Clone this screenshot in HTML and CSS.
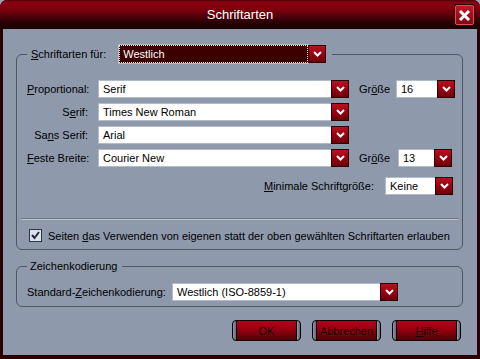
FILE: index.html
```html
<!DOCTYPE html>
<html lang="de">
<head>
  <meta charset="UTF-8">
  <meta name="viewport" content="width=device-width, initial-scale=1.0">
  <title>Schriftarten</title>
  <link rel="stylesheet" href="styles.css">
</head>
<body>
  <div class="window">
    <div class="titlebar">
      <span class="title">Schriftarten</span>
      <button class="close" aria-label="Schließen">
        <svg width="13" height="13" viewBox="0 0 13 13"><path d="M2 2 L11 11 M11 2 L2 11" stroke="#fff" stroke-width="3" fill="none"/></svg>
      </button>
    </div>

    <div class="content">
      <!-- Schriftarten -->
      <fieldset class="group fonts">
        <legend class="legend-select">
          <span class="legend-label"><u>S</u>chriftarten für:</span>
          <div class="combo combo-dark w-lang">
            <span class="field">Westlich</span>
            <span class="drop"><svg width="9" height="6" viewBox="0 0 9 6"><path d="M1 1 L4.5 4.5 L8 1" stroke="#fff" stroke-width="2" fill="none"/></svg></span>
          </div>
        </legend>

        <div class="row">
          <span class="lbl"><u>P</u>roportional:</span>
          <div class="combo w-main">
            <span class="field">Serif</span>
            <span class="drop"><svg width="9" height="6" viewBox="0 0 9 6"><path d="M1 1 L4.5 4.5 L8 1" stroke="#fff" stroke-width="2" fill="none"/></svg></span>
          </div>
          <span class="size-lbl">Gr<u>ö</u>ße</span>
          <div class="combo w-size">
            <span class="field">16</span>
            <span class="drop"><svg width="9" height="6" viewBox="0 0 9 6"><path d="M1 1 L4.5 4.5 L8 1" stroke="#fff" stroke-width="2" fill="none"/></svg></span>
          </div>
        </div>

        <div class="row">
          <span class="lbl">S<u>e</u>rif:</span>
          <div class="combo w-main">
            <span class="field">Times New Roman</span>
            <span class="drop"><svg width="9" height="6" viewBox="0 0 9 6"><path d="M1 1 L4.5 4.5 L8 1" stroke="#fff" stroke-width="2" fill="none"/></svg></span>
          </div>
        </div>

        <div class="row">
          <span class="lbl">Sa<u>n</u>s Serif:</span>
          <div class="combo w-main">
            <span class="field">Arial</span>
            <span class="drop"><svg width="9" height="6" viewBox="0 0 9 6"><path d="M1 1 L4.5 4.5 L8 1" stroke="#fff" stroke-width="2" fill="none"/></svg></span>
          </div>
        </div>

        <div class="row">
          <span class="lbl"><u>F</u>este Breite:</span>
          <div class="combo w-main">
            <span class="field">Courier New</span>
            <span class="drop"><svg width="9" height="6" viewBox="0 0 9 6"><path d="M1 1 L4.5 4.5 L8 1" stroke="#fff" stroke-width="2" fill="none"/></svg></span>
          </div>
          <span class="size-lbl wide">Gr<u>ö</u>ße</span>
          <div class="combo w-size2">
            <span class="field">13</span>
            <span class="drop"><svg width="9" height="6" viewBox="0 0 9 6"><path d="M1 1 L4.5 4.5 L8 1" stroke="#fff" stroke-width="2" fill="none"/></svg></span>
          </div>
        </div>

        <div class="row row-min">
          <span class="min-lbl"><u>M</u>inimale Schriftgröße:</span>
          <div class="combo w-min">
            <span class="field">Keine</span>
            <span class="drop"><svg width="9" height="6" viewBox="0 0 9 6"><path d="M1 1 L4.5 4.5 L8 1" stroke="#fff" stroke-width="2" fill="none"/></svg></span>
          </div>
        </div>

        <div class="separator"></div>

        <label class="check-row">
          <span class="checkbox">
            <svg width="13" height="13" viewBox="0 0 13 13"><path d="M3 6 L5.5 9 L10 3" stroke="#1f2a40" stroke-width="2" fill="none"/></svg>
          </span>
          <span>Seiten <u>d</u>as Verwenden von eigenen statt der oben gewählten Schriftarten erlauben</span>
        </label>
      </fieldset>

      <!-- Zeichenkodierung -->
      <fieldset class="group encoding">
        <legend class="legend-text">Zeichenkodierung</legend>
        <div class="row">
          <span class="enc-lbl">Standard-<u>Z</u>eichenkodierung:</span>
          <div class="combo w-enc">
            <span class="field">Westlich (ISO-8859-1)</span>
            <span class="drop"><svg width="9" height="6" viewBox="0 0 9 6"><path d="M1 1 L4.5 4.5 L8 1" stroke="#fff" stroke-width="2" fill="none"/></svg></span>
          </div>
        </div>
      </fieldset>

      <div class="buttons">
        <button class="btn">OK</button>
        <button class="btn">Abbrechen</button>
        <button class="btn"><u>H</u>ilfe</button>
      </div>
    </div>
  </div>
</body>
</html>
```

FILE: styles.css
```css
/* Grundlayout */
html, body {
  margin: 0;
  padding: 0;
  background: #9aa3b0;
}
body {
  font-family: 'Liberation Sans', Arial, sans-serif;
  font-size: 11px;
  color: #000;
}
u {
  text-decoration: underline;
  text-underline-offset: 1px;
}
/* Fensterrahmen */
.window {
  width: 480px;
  height: 359px;
  box-sizing: border-box;
  background: #2a0003;
  border-radius: 7px 7px 0 0;
  display: flex;
  flex-direction: column;
  overflow: hidden;
}
.titlebar {
  position: relative;
  height: 29px;
  flex: none;
  display: flex;
  align-items: center;
  justify-content: center;
  background: linear-gradient(#4a000c 0, #8a0010 2px, #80000f 9px, #4c000a 17px, #260000 23px, #1c0000 29px);
}
.title {
  color: #fff;
  font-size: 13px;
}
.close {
  position: absolute;
  right: 6px;
  top: 5px;
  width: 19px;
  height: 20px;
  padding: 0;
  display: flex;
  align-items: center;
  justify-content: center;
  border: 1px solid #d8505c;
  border-radius: 2px;
  background: linear-gradient(#c41826, #9c0c18 60%, #800812);
  box-shadow: 0 0 0 1px #300004;
}
.content {
  flex: 1;
  margin: 0 3px 4px;
  background: #8e99ac;
  display: flex;
  flex-direction: column;
}
/* Gruppen */
.group {
  margin: 16px 14px 0 13px;
  padding: 17px 6px 7px 10px;
  border: 1px solid #515761;
  border-radius: 6px;
  min-width: 0;
}
.legend-select {
  display: flex;
  align-items: center;
  padding: 0 6px 0 4px;
}
.legend-label {
  margin-right: 13px;
}
.legend-text {
  padding: 0 5px 0 3px;
  line-height: 13px;
}
.encoding {
  margin-top: 10px;
  padding: 10px 6px 5px 10px;
}
/* Zeilen */
.row {
  display: flex;
  align-items: center;
  height: 18px;
  margin-bottom: 5px;
}
.encoding .row {
  margin-bottom: 0;
}
.lbl {
  width: 61px;
  flex: none;
  text-align: right;
  margin-right: 10px;
  white-space: nowrap;
}
.size-lbl {
  width: 37px;
  flex: none;
  margin-left: 10px;
}
.size-lbl.wide {
  width: 39px;
}
.row-min {
  justify-content: flex-end;
  margin-top: 10px;
  margin-bottom: 0;
}
.min-lbl {
  margin-right: 11px;
}
.row-min .combo {
  margin-right: 3px;
}
.enc-lbl {
  width: 145px;
  flex: none;
}
/* Kombinationsfelder */
.combo {
  display: flex;
  height: 18px;
  flex: none;
}
.field {
  flex: 1;
  min-width: 0;
  box-sizing: border-box;
  background: #fff;
  border: 1px solid #b3bbc7;
  border-right: 0;
  padding-left: 4px;
  line-height: 16px;
  white-space: nowrap;
  overflow: hidden;
}
.combo-dark .field {
  background: #3c0000;
  color: #fff;
  border: 1px dotted #f4e2c4;
  box-shadow: 0 0 0 1px #b3bbc7;
  padding-left: 3px;
}
.drop {
  width: 18px;
  height: 18px;
  flex: none;
  box-sizing: border-box;
  border: 1px solid #2a0002;
  background: linear-gradient(#b8111f, #950010 55%, #6c000a);
  display: flex;
  align-items: center;
  justify-content: center;
}
.w-lang { width: 207px; }
.w-main { width: 251px; }
.w-size { width: 59px; }
.w-size2 { width: 54px; }
.w-min { width: 68px; }
.w-enc { width: 226px; }
/* Trennlinie und Checkbox */
.separator {
  margin: 23px -2px 0 -6px;
  border-top: 1px solid #6c7482;
  border-bottom: 1px solid #bac2ce;
}
.check-row {
  display: flex;
  align-items: center;
  height: 13px;
  margin-top: 9px;
  padding-left: 2px;
  white-space: nowrap;
}
.checkbox {
  width: 13px;
  height: 13px;
  box-sizing: border-box;
  border: 1px solid #2c3444;
  background: #dde3ec;
  margin-right: 6px;
  display: flex;
  flex: none;
}
.checkbox svg {
  margin: -1px;
}
/* Schaltflächen */
.buttons {
  display: flex;
  justify-content: flex-end;
  gap: 11px;
  margin: 13px 16px 0 0;
}
.btn {
  width: 69px;
  height: 21px;
  padding: 0;
  border: 1px solid #140000;
  border-radius: 4px;
  font-family: inherit;
  font-size: 11px;
  color: #1a0000;
  background:
    linear-gradient(to right, #8c9bb0 0, #5c6a80 3px, #140000 3px, #140000 4px, transparent 4px, transparent calc(100% - 4px), #140000 calc(100% - 4px), #140000 calc(100% - 3px), #8c9bb0 calc(100% - 3px), #5c6a80 100%),
    linear-gradient(#b0001a, #96000f 45%, #6a000a 80%, #520008);
}
```
